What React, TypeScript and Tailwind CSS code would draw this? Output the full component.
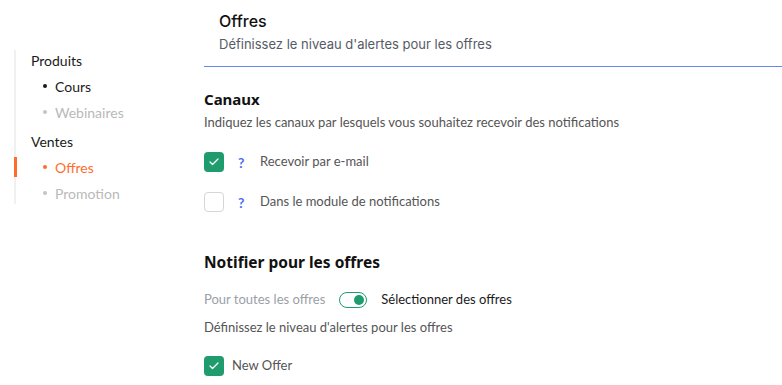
import { Check } from 'lucide-react';

const lato = { fontFamily: 'Lato, "Liberation Sans", sans-serif' };

function Box({ checked }: { checked: boolean }) {
    return checked ? (
        <div className="w-5 h-5 rounded-[4px] bg-[#1f9c6d] flex items-center justify-center flex-shrink-0">
            <Check className="w-3 h-3 text-white" strokeWidth={2.5} />
        </div>
    ) : (
        <div className="w-5 h-5 rounded-[4px] border border-[#d6d6d6] bg-white flex-shrink-0" />
    );
}

function NavItem({ label, state }: { label: string; state: 'on' | 'off' | 'active' }) {
    const color = state === 'active' ? 'text-[#ff6d2d]' : state === 'on' ? 'text-[#1a1a1a]' : 'text-[#b9b9b9]';
    const dot = state === 'active' ? 'bg-[#ff6d2d]' : state === 'on' ? 'bg-[#1a1a1a]' : 'bg-[#c4c4c4]';
    return (
        <div className="relative h-[26px] flex items-center pl-[27px]">
            {state === 'active' && <div className="absolute -left-[2px] top-[3px] w-[3px] h-[20px] bg-[#ff6d2d]" />}
            <span className={`w-[4px] h-[4px] rounded-full ${dot} mr-[8px]`} />
            <span className={`text-[14px] ${color}`}>{label}</span>
        </div>
    );
}

export default function App() {
    return (
        <div className="w-[782px] h-[385px] bg-white flex overflow-hidden" style={lato}>
            <div className="w-[204px] flex-shrink-0 pt-[50px] pl-[14px]">
                <div className="border-l-2 border-[#f0f0f0] h-[154px]">
                    <div className="h-[20px] flex items-center pl-[15px] text-[14px] text-[#1a1a1a]">Produits</div>
                    <div className="pt-[3px]">
                        <NavItem label="Cours" state="on" />
                        <NavItem label="Webinaires" state="off" />
                    </div>
                    <div className="h-[20px] mt-[6px] flex items-center pl-[15px] text-[14px] text-[#1a1a1a]">Ventes</div>
                    <div className="pt-[3px]">
                        <NavItem label="Offres" state="active" />
                        <NavItem label="Promotion" state="off" />
                    </div>
                </div>
            </div>

            <div className="flex-1 flex flex-col">
                <div className="pl-[15px] pt-[10px] h-[67px] border-b border-[#6389f0]" style={{ fontFamily: 'Inter, "Liberation Sans", sans-serif' }}>
                    <div className="text-[16px] font-medium text-[#111] leading-[22px]">Offres</div>
                    <div className="text-[13px] text-[#555b66] mt-[3px] leading-[18px]">Définissez le niveau d'alertes pour les offres</div>
                </div>

                <div className="pt-[22px]">
                    <div className="text-[15px] font-bold text-[#111] leading-[20px]" style={{ fontFamily: '"Noto Sans", sans-serif' }}>Canaux</div>
                    <div className="text-[13px] text-[#555] mt-[4px] leading-[18px]">Indiquez les canaux par lesquels vous souhaitez recevoir des notifications</div>

                    <div className="flex items-center mt-[21px] h-[20px]">
                        <Box checked />
                        <span className="ml-[14px] w-[22px] text-[14px] font-bold text-[#4f6ff0]">?</span>
                        <span className="text-[13px] text-[#555]">Recevoir par e-mail</span>
                    </div>
                    <div className="flex items-center mt-[20px] h-[20px]">
                        <Box checked={false} />
                        <span className="ml-[14px] w-[22px] text-[14px] font-bold text-[#4f6ff0]">?</span>
                        <span className="text-[13px] text-[#555]">Dans le module de notifications</span>
                    </div>

                    <div className="mt-[40px] text-[15.5px] font-bold text-[#111] leading-[20px]" style={{ fontFamily: '"Noto Sans", sans-serif' }}>Notifier pour les offres</div>

                    <div className="flex items-center mt-[18px] h-[20px]">
                        <span className="text-[13px] text-[#9aa0a8]">Pour toutes les offres</span>
                        <div className="ml-[14px] w-[28px] h-[16px] rounded-full border-[1.5px] border-[#1f9c6d] flex items-center justify-end pr-[2px]">
                            <div className="w-[10px] h-[10px] rounded-full bg-[#1f9c6d]" />
                        </div>
                        <span className="ml-[14px] text-[13px] text-[#1a1a1a]">Sélectionner des offres</span>
                    </div>

                    <div className="text-[13px] text-[#555] mt-[8px] leading-[18px]">Définissez le niveau d'alertes pour les offres</div>

                    <div className="flex items-center mt-[20px] h-[20px]">
                        <Box checked />
                        <span className="ml-[8px] text-[13px] text-[#555]">New Offer</span>
                    </div>
                </div>
            </div>
        </div>
    );
}
